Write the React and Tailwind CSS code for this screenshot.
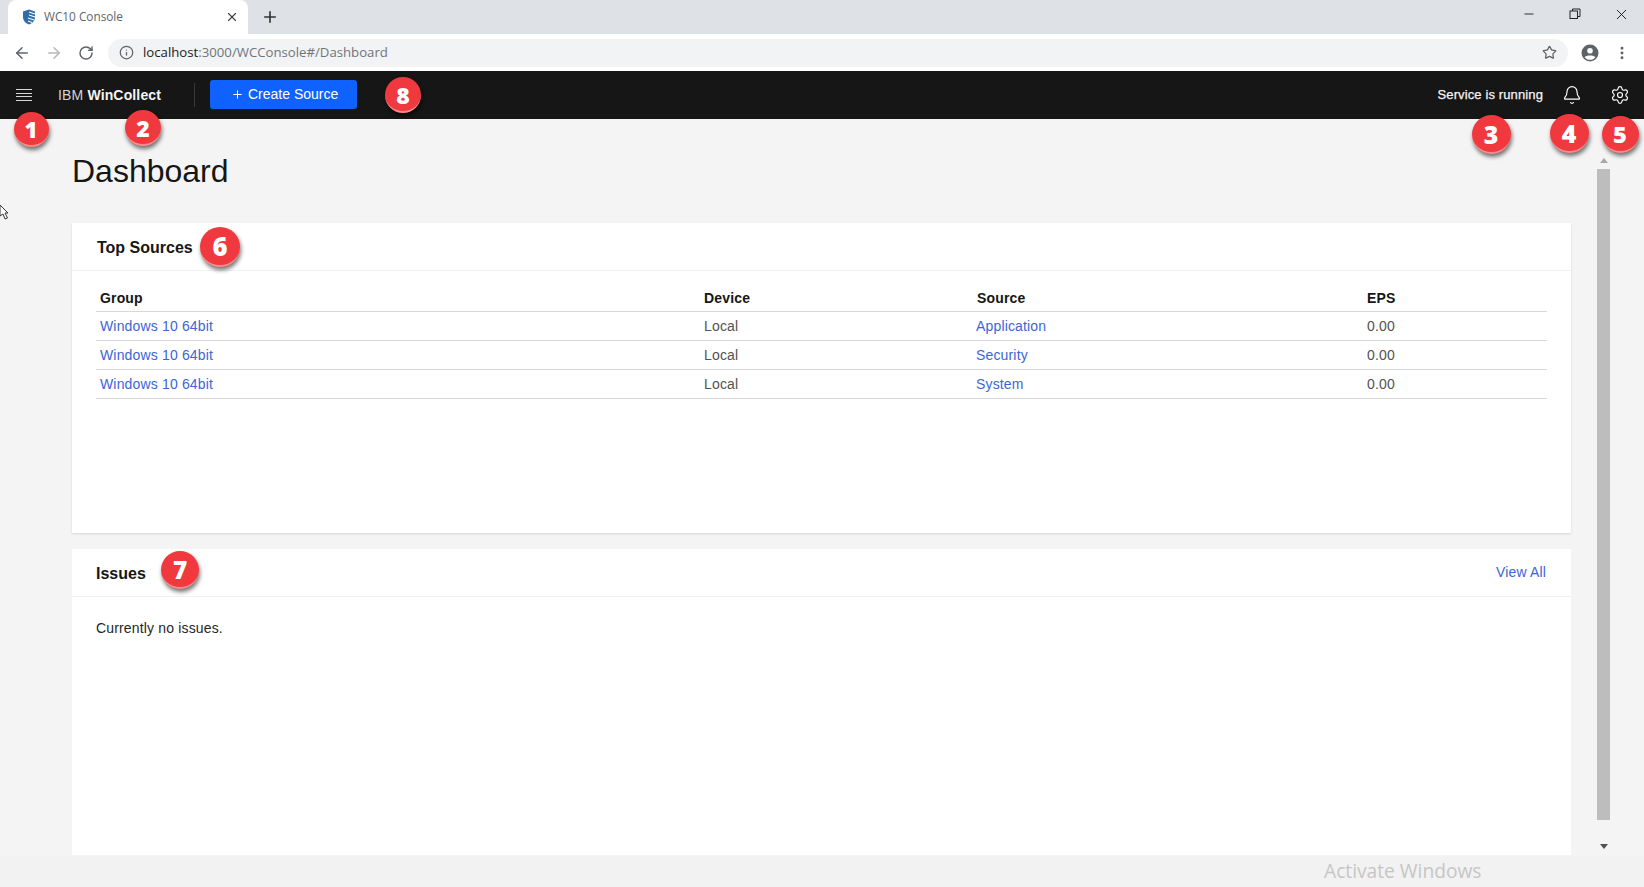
import React from "react";
import { Bell, Settings, Plus, ArrowLeft, ArrowRight, RotateCw, Info, Star, X, Minus, EllipsisVertical } from "lucide-react";

const rows = [
  ["Windows 10 64bit", "Local", "Application", "0.00"],
  ["Windows 10 64bit", "Local", "Security", "0.00"],
  ["Windows 10 64bit", "Local", "System", "0.00"],
];

function Badge({ n, x, y, d }) {
  return (
    <div
      className="absolute flex items-center justify-center rounded-full bg-[#f0393f] text-white font-extrabold border-b-2 border-[#ff8a8a] pt-[3px] shadow-[1px_3px_4px_rgba(0,0,0,0.55)] font-['Open_Sans',sans-serif]"
      style={{ left: x - d / 2, top: y - d / 2, width: d, height: d, fontSize: d * 0.64 }}
    >
      {n}
    </div>
  );
}

function Favicon() {
  return (
    <svg width="14" height="16" viewBox="0 0 14 16">
      <path d="M7 0.5 L13 2.5 V8 C13 12 10 14.5 7 15.5 C4 14.5 1 12 1 8 V2.5 Z" fill="#2f6ea8" />
      <path d="M7 3 L13 5 M7 6 L13 8 M6 9 L12 11 M6 12 L10 13.5" stroke="#fff" strokeWidth="1.1" />
    </svg>
  );
}

function Restore() {
  return (
    <svg width="12" height="12" viewBox="0 0 12 12" fill="none" stroke="#222" strokeWidth="1">
      <rect x="1" y="3" width="7.5" height="7.5" />
      <path d="M3.5 3 V1 H11 V8.5 H8.5" />
    </svg>
  );
}

function Profile() {
  return (
    <svg width="18" height="18" viewBox="0 0 18 18">
      <circle cx="9" cy="9" r="8.5" fill="#5f6368" />
      <circle cx="9" cy="6.8" r="2.8" fill="#fff" />
      <path d="M3.6 13.2 C5 10.9 13 10.9 14.4 13.2 C13.2 14.9 11.2 15.8 9 15.8 C6.8 15.8 4.8 14.9 3.6 13.2 Z" fill="#fff" />
    </svg>
  );
}

function Hamburger() {
  return (
    <svg width="16" height="12" viewBox="0 0 16 12" stroke="#d8d8d8" strokeWidth="1">
      <path d="M0 .5H16M0 4.5H16M0 7.5H16M0 11.5H16" />
    </svg>
  );
}

function Cursor() {
  return (
    <svg className="absolute left-0 top-[204px]" width="10" height="18" viewBox="0 0 10 18" fill="#fff" stroke="#333" strokeWidth="1">
      <path d="M0 1 L8 9 H5 L7.5 14 L5 15 L3 10 L0 12 Z" />
    </svg>
  );
}

export default function App() {
  return (
    <div className="relative h-[887px] w-[1644px] overflow-hidden bg-[#f4f4f4] flex flex-col font-['Liberation_Sans',sans-serif]">
      {/* tab strip */}
      <div className="h-[34px] shrink-0 bg-[#dee1e6] flex items-end pl-2 font-['Open_Sans',sans-serif]">
        <div className="w-[240px] h-[34px] bg-white rounded-t-lg flex items-center pl-[14px] pr-[9px]">
          <Favicon />
          <span className="ml-[8px] text-[11.8px] text-[#5f6368]">WC10 Console</span>
          <X size={14} strokeWidth={2} className="ml-auto text-[#444]" />
        </div>
        <div className="h-[34px] flex items-center ml-[13px]">
          <Plus size={18} strokeWidth={2.2} className="text-[#333]" />
        </div>
        <div className="ml-auto h-[34px] flex items-center text-[#222]">
          <div className="w-[46px] flex justify-center pb-[6px]"><Minus size={14} strokeWidth={1.6} /></div>
          <div className="w-[46px] flex justify-center pb-[6px]"><Restore /></div>
          <div className="w-[46px] flex justify-center pb-[6px]"><X size={17} strokeWidth={1.4} /></div>
        </div>
      </div>

      {/* toolbar */}
      <div className="h-[37px] shrink-0 bg-white flex items-center pl-[13px] font-['Open_Sans',sans-serif]">
        <ArrowLeft size={18} strokeWidth={2} className="text-[#5f6368]" />
        <ArrowRight size={18} strokeWidth={2} className="ml-[14px] text-[#b5b7ba]" />
        <RotateCw size={16} strokeWidth={2.2} className="ml-[15px] text-[#5f6368]" />
        <div className="ml-[14px] w-[1460px] h-[28px] rounded-full bg-[#f1f3f4] flex items-center pl-[11px] pr-[11px]">
          <Info size={15} strokeWidth={2} className="text-[#5f6368]" />
          <span className="ml-[9px] text-[13.2px] text-[#202124]">localhost<span className="text-[#70757a]">:3000/WCConsole#/Dashboard</span></span>
          <Star size={15} strokeWidth={2} className="ml-auto text-[#5f6368]" />
        </div>
        <div className="ml-[13px]"><Profile /></div>
        <EllipsisVertical size={16} strokeWidth={2.4} className="ml-[15px] text-[#5f6368]" />
      </div>

      {/* app header */}
      <header className="h-[48px] shrink-0 bg-[#161616] flex items-center pl-4 pr-[14px]">
        <Hamburger />
        <div className="ml-[26px] text-[14px] tracking-[0.15px] text-[#d4d4d4] whitespace-nowrap">IBM <span className="font-bold text-[#f4f4f4]">WinCollect</span></div>
        <div className="ml-[33px] w-px h-[24px] bg-[#393939]" />
        <button className="ml-[15px] w-[147px] h-[29px] mb-[1px] pl-[2px] rounded-[3px] bg-[#0f62fe] text-white text-[14px] flex items-center justify-center gap-[4px]">
          <Plus size={13} strokeWidth={1.8} />
          Create Source
        </button>
        <div className="ml-auto text-[13px] font-medium tracking-[0.12px] text-[#f4f4f4] [-webkit-text-stroke:0.25px_#f4f4f4]">Service is running</div>
        <Bell size={20} strokeWidth={1.4} className="ml-[19px] text-white" />
        <Settings size={20} strokeWidth={1.4} className="ml-[28px] text-white" />
      </header>

      {/* main */}
      <main className="h-[737px] shrink-0 flex">
        <div className="w-[1571px] ml-[72px] flex flex-col shrink-0">
          <h1 className="mt-[32px] h-[40px] leading-[40px] text-[32px] text-[#161616]">Dashboard</h1>
          <section className="mt-[32px] w-[1499px] h-[310px] bg-white shadow-[0_1px_2px_rgba(0,0,0,0.12)]">
            <div className="h-[48px] border-b border-[#f1f1f1] pl-[25px] pt-[3px] flex items-center text-[16px] font-bold text-[#161616]">Top Sources</div>
            <div className="mt-[16px] mx-6">
              <table className="w-[1451px] table-fixed text-[14px] tracking-[0.16px]">
                <colgroup>
                  <col className="w-[604px]" />
                  <col className="w-[272px]" />
                  <col className="w-[391px]" />
                  <col />
                </colgroup>
                <thead>
                  <tr className="h-[24px] border-b border-[#d8d8d8] text-left text-[#161616] font-bold">
                    <th className="pl-1 font-bold">Group</th>
                    <th className="pl-1 font-bold">Device</th>
                    <th className="pl-[5px] font-bold">Source</th>
                    <th className="pl-1 font-bold">EPS</th>
                  </tr>
                </thead>
                <tbody>
                  {rows.map((r) => (
                    <tr key={r[2]} className="h-[29px] border-b border-[#d8d8d8]">
                      <td className="pl-1 pt-[1px] text-[#3d65d8]">{r[0]}</td>
                      <td className="pl-1 pt-[1px] text-[#525252]">{r[1]}</td>
                      <td className="pl-1 pt-[1px] text-[#3d65d8]">{r[2]}</td>
                      <td className="pl-1 pt-[1px] text-[#525252]">{r[3]}</td>
                    </tr>
                  ))}
                </tbody>
              </table>
            </div>
          </section>
          <section className="mt-[16px] w-[1499px] h-[306px] bg-white">
            <div className="h-[48px] border-b border-[#f1f1f1] pl-6 pr-6 flex items-center justify-between">
              <span className="text-[16px] font-bold text-[#161616] pt-[2px]">Issues</span>
              <span className="text-[14px] text-[#3d65d8] tracking-[0.16px] -mt-[1px] mr-[1px]">View All</span>
            </div>
            <p className="mt-[21px] ml-6 text-[14px] text-[#262626] tracking-[0.16px]">Currently no issues.</p>
          </section>
        </div>

        {/* page scrollbar */}
        <div className="ml-[-46px] w-[13px] shrink-0 flex flex-col items-center mt-[33px]">
          <div className="h-[17px] flex items-center"><div className="border-x-[4px] border-x-transparent border-b-[5px] border-b-[#a8a8a8]" /></div>
          <div className="h-[651px] w-[13px] shrink-0 bg-[#bdbdbd]" />
          <div className="h-[36px] flex items-end pb-[7px]"><div className="border-x-[4px] border-x-transparent border-t-[5px] border-t-[#505050]" /></div>
        </div>
      </main>

      {/* bottom strip */}
      <div className="h-[32px] shrink-0 bg-[#f2f2f2] flex items-center pl-[1324px] pb-[2px] text-[19.2px] text-[#c6c6c6] font-['Open_Sans',sans-serif]">Activate Windows</div>

      <Cursor />
      <Badge n={1} x={31} y={129} d={35} />
      <Badge n={2} x={143} y={128} d={36} />
      <Badge n={8} x={403} y={95} d={36} />
      <Badge n={3} x={1491} y={134} d={39} />
      <Badge n={4} x={1569} y={133} d={39} />
      <Badge n={5} x={1620} y={134} d={37} />
      <Badge n={6} x={220} y={247} d={40} />
      <Badge n={7} x={180} y={570} d={38} />
    </div>
  );
}
